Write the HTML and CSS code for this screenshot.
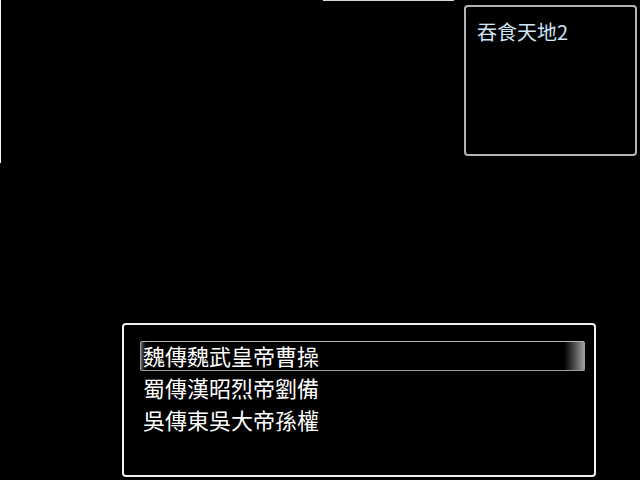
FILE: index.html
```html
<!DOCTYPE html>
<html lang="zh-Hant">
<head>
<meta charset="utf-8">
<title>吞食天地2</title>
<link rel="stylesheet" href="styles.css">
</head>
<body>
<div class="screen">
  <div class="top">
    <div class="edge"></div>
    <div class="glitch"></div>
    <div class="status">
      <div class="status-title">吞食天地2</div>
    </div>
  </div>
  <div class="menu">
    <ul class="menu-list">
      <li class="menu-item selected">魏傳魏武皇帝曹操</li>
      <li class="menu-item">蜀傳漢昭烈帝劉備</li>
      <li class="menu-item">吳傳東吳大帝孫權</li>
    </ul>
  </div>
</div>
</body>
</html>
```
FILE: styles.css
```css
html, body {
  margin: 0;
  padding: 0;
  background: #000;
}
.screen {
  width: 640px;
  height: 480px;
  background: #000;
  display: flex;
  flex-direction: column;
  font-family: "Noto Sans CJK TC", "Noto Sans CJK SC", "Noto Sans", sans-serif;
  color: #fff;
}
.top {
  display: flex;
  align-items: flex-start;
  height: 163px;
}
.edge {
  width: 1px;
  height: 163px;
  background: #f4f4f4;
}
.glitch {
  margin-left: 322px;
  width: 131px;
  height: 1px;
  background: #d8d8d8;
}
.status {
  box-sizing: border-box;
  margin-left: auto;
  margin-top: 5px;
  margin-right: 3px;
  width: 173px;
  height: 151px;
  border: 2px solid #b4b4b4;
  border-radius: 4px;
  padding: 15px 0 0 11px;
}
.status-title {
  font-size: 20px;
  line-height: 20px;
  color: #cfe5f8;
}
.menu {
  box-sizing: border-box;
  margin-top: auto;
  margin-left: 122px;
  margin-bottom: 3px;
  width: 474px;
  height: 154px;
  border: 2px solid #f2f2f2;
  border-radius: 4px;
  padding: 16px 9px 0 16px;
}
.menu-list {
  list-style: none;
  margin: 0;
  padding: 0;
  display: flex;
  flex-direction: column;
  gap: 2px;
}
.menu-item {
  box-sizing: border-box;
  height: 30px;
  padding: 0 2px;
  border: 1px solid transparent;
  font-size: 22px;
  line-height: 27px;
  color: #fff;
}
.menu-item.selected {
  border-color: #9c9c9c;
  border-top-color: #b8b8b8;
  border-radius: 2px;
  background: linear-gradient(90deg, #6a6a6a 0, #1a1a1a 3px, #000 6px, #000 calc(100% - 20px), #2a2a2a calc(100% - 14px), #9c9c9c 100%);
}
```
